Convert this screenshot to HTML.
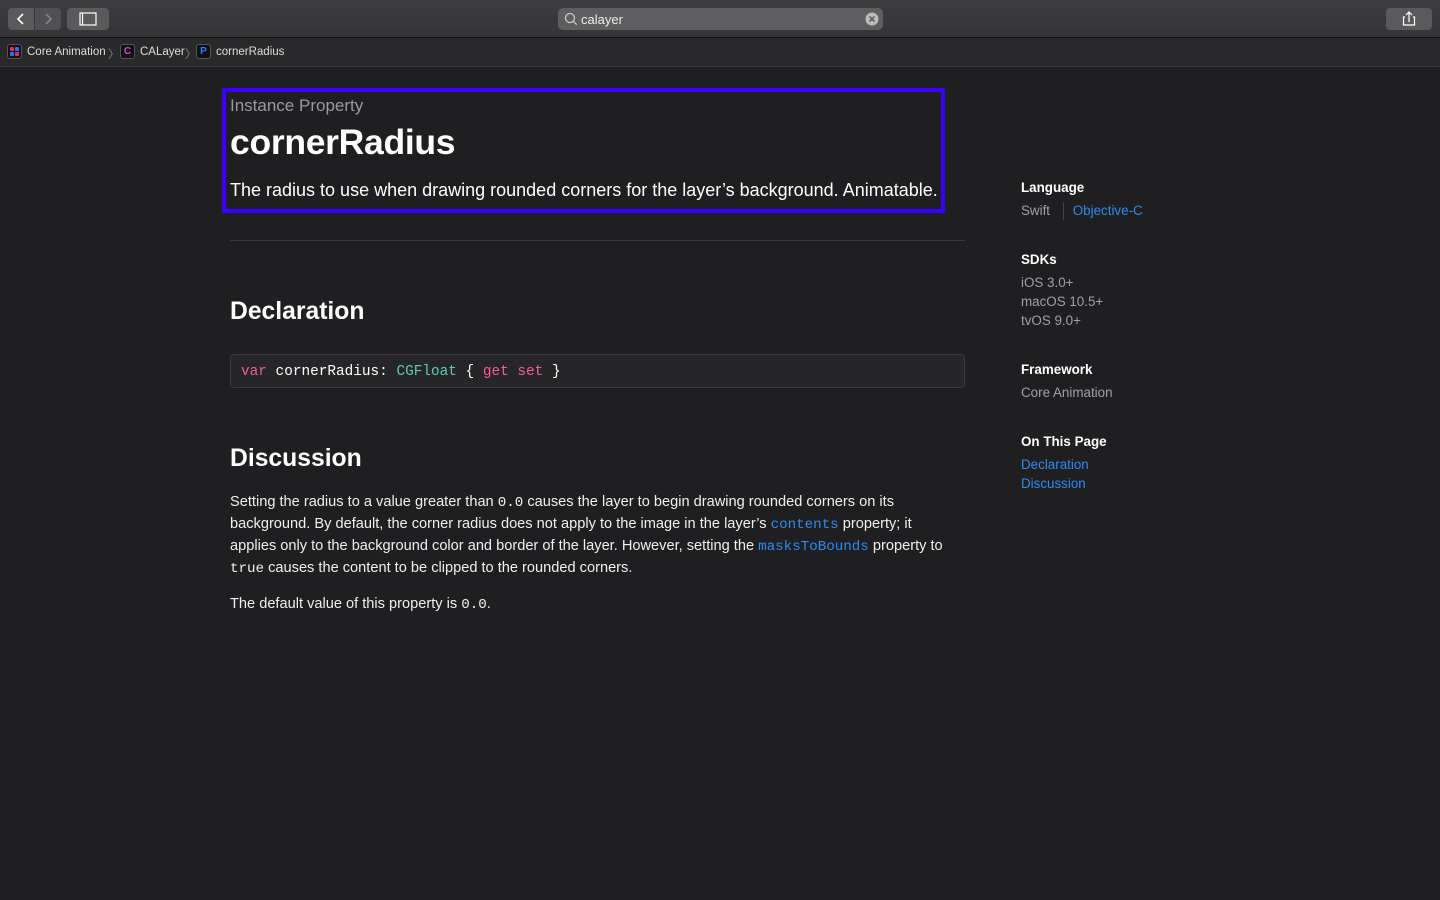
<!DOCTYPE html>
<html><head><meta charset="utf-8"><style>
*{margin:0;padding:0;box-sizing:border-box}
body{width:1440px;height:900px;background:#1f1f22;font-family:"Liberation Sans",sans-serif;color:#fff;position:relative;overflow:hidden}
.tb{position:absolute;left:0;top:0;width:1440px;height:38px;background:linear-gradient(#3d3d3f,#353537);border-bottom:1px solid #111}
.btn{position:absolute;top:8px;height:22px;background:#5a5a5c;border-radius:4px}
.bc{position:absolute;left:0;top:38px;width:1440px;height:29px;background:#29292b;border-bottom:1px solid #3a3a3c;font-size:11.5px;color:#ddd}
.bc span{position:absolute;top:8px}
.ic{position:absolute;top:6px;width:15px;height:15px;background:#111;border:1px solid #555;border-radius:3px;font-size:10px;font-weight:bold;text-align:center;line-height:13px}
.main{position:absolute;left:230px}
.mono{font-family:"Liberation Mono",monospace}
.side{position:absolute;left:1021px;font-size:13.4px}
.side h4{font-size:13.4px;font-weight:bold;color:#fff;margin-bottom:6px}
.g{color:#a0a0a5;line-height:19px}
.l{color:#2e8cf0;line-height:19px}
p.b{font-size:14.6px;line-height:22px;color:#f0f0f0;white-space:nowrap}
p.b code{font-family:"Liberation Mono",monospace;font-size:14.2px;line-height:1}
</style></head><body>
<div class="tb">
 <div class="btn" style="left:8px;width:26px;border-radius:4px 0 0 4px"><svg width="26" height="22"><path d="M15 6l-5 5 5 5" stroke="#fff" stroke-width="1.6" fill="none"/></svg></div>
 <div class="btn" style="left:35px;width:26px;border-radius:0 4px 4px 0;background:#505052"><svg width="26" height="22"><path d="M11 6l5 5-5 5" stroke="#888" stroke-width="1.6" fill="none"/></svg></div>
 <div class="btn" style="left:67px;width:42px"><svg width="42" height="22"><rect x="13" y="5" width="16" height="12" stroke="#fff" stroke-width="1.2" fill="none"/><line x1="15.5" y1="5" x2="15.5" y2="17" stroke="#fff" stroke-width="1.2"/></svg></div>
 <div class="btn" style="left:558px;width:325px;background:#5e5e60;border-radius:5px">
  <svg width="20" height="22" style="position:absolute;left:3px;top:0"><circle cx="9" cy="10" r="4.5" stroke="#ccc" stroke-width="1.3" fill="none"/><path d="M12.2 13.2l3.5 3.5" stroke="#ccc" stroke-width="1.3"/></svg>
  <span style="position:absolute;left:23px;top:4px;font-size:13px;color:#eee">calayer</span>
  <svg width="16" height="16" style="position:absolute;right:3px;top:3px"><circle cx="8" cy="8" r="6.5" fill="#bbb"/><path d="M5.5 5.5l5 5M10.5 5.5l-5 5" stroke="#555" stroke-width="1.5"/></svg>
 </div>
 <div class="btn" style="left:1386px;width:46px"><svg width="46" height="22"><path d="M19 9h-1.5v8h11v-8H27M23 14V4M20 7l3-3 3 3" stroke="#fff" stroke-width="1.2" fill="none"/></svg></div>
</div>
<div class="bc">
 <div class="ic" style="left:7px"><svg width="13" height="13"><rect x="2" y="2" width="4" height="4" rx="1" fill="#e0306a"/><rect x="7" y="2" width="4" height="4" rx="1" fill="#3a6bff"/><rect x="2" y="7" width="4" height="4" rx="1" fill="#3a6bff"/><rect x="7" y="7" width="4" height="4" rx="1" fill="#e0306a"/></svg></div>
 <span style="left:27px">Core Animation</span><span style="left:108px;color:#888">〉</span>
 <div class="ic" style="left:120px;color:#d040e0">C</div>
 <span style="left:140px">CALayer</span><span style="left:185px;color:#888">〉</span>
 <div class="ic" style="left:196px;color:#2a7cff">P</div>
 <span style="left:216px">cornerRadius</span>
</div>
<div style="position:absolute;left:222px;top:88px;width:723px;height:125px;border:4px solid #3b00ff"></div>
<div class="main" style="top:96px;font-size:17px;color:#9a9aa0">Instance Property</div>
<div class="main" style="top:122px;font-size:35.5px;font-weight:bold;letter-spacing:-0.3px">cornerRadius</div>
<div class="main" style="top:180px;font-size:18px;white-space:nowrap">The radius to use when drawing rounded corners for the layer’s background. Animatable.</div>
<div class="main" style="top:240px;width:735px;height:1px;background:#3a3a3c"></div>
<div class="main" style="top:298px;font-size:24.7px;font-weight:bold">Declaration</div>
<div class="main mono" style="top:354px;width:735px;height:34px;border:1px solid #3c3c3f;border-radius:4px;background:#262629;font-size:14.4px;padding:9px 10px;color:#fff"><span style="color:#f0609a">var</span> cornerRadius: <span style="color:#5ec9b4">CGFloat</span> { <span style="color:#f0609a">get</span> <span style="color:#f0609a">set</span> }</div>
<div class="main" style="top:445px;font-size:24.7px;font-weight:bold">Discussion</div>
<div class="main" style="top:491px">
<p class="b">Setting the radius to a value greater than <code>0.0</code> causes the layer to begin drawing rounded corners on its<br>background. By default, the corner radius does not apply to the image in the layer’s <code style="color:#2e8cf0">contents</code> property; it<br>applies only to the background color and border of the layer. However, setting the <code style="color:#2e8cf0">masksToBounds</code> property to<br><code>true</code> causes the content to be clipped to the rounded corners.</p>
<p class="b" style="margin-top:14px">The default value of this property is <code>0.0</code>.</p>
</div>
<div class="side" style="top:180px"><h4>Language</h4><div class="g">Swift <span style="display:inline-block;width:1px;height:18px;background:#444;vertical-align:middle;margin:0 9px"></span><span class="l">Objective-C</span></div></div>
<div class="side" style="top:252px"><h4>SDKs</h4><div class="g">iOS 3.0+</div><div class="g">macOS 10.5+</div><div class="g">tvOS 9.0+</div></div>
<div class="side" style="top:362px"><h4>Framework</h4><div class="g">Core Animation</div></div>
<div class="side" style="top:434px"><h4>On This Page</h4><div class="l">Declaration</div><div class="l">Discussion</div></div>
</body></html>
